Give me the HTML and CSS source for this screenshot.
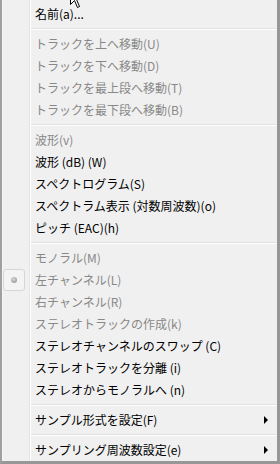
FILE: index.html
```html
<!DOCTYPE html>
<html lang="ja">
<head>
    <meta charset="UTF-8">
    <meta name="viewport" content="width=device-width, initial-scale=1.0">
    <title>トラックメニュー</title>
    <link rel="stylesheet" href="styles.css">
</head>
<body>
    <div class="menu">
        <div class="item"><span class="check"></span><span class="label">名前(a)...</span></div>
        <div class="sep"></div>
        <div class="item disabled"><span class="check"></span><span class="label">トラックを上へ移動(U)</span></div>
        <div class="item disabled"><span class="check"></span><span class="label">トラックを下へ移動(D)</span></div>
        <div class="item disabled"><span class="check"></span><span class="label">トラックを最上段へ移動(T)</span></div>
        <div class="item disabled"><span class="check"></span><span class="label">トラックを最下段へ移動(B)</span></div>
        <div class="sep"></div>
        <div class="item disabled"><span class="check"></span><span class="label">波形(v)</span></div>
        <div class="item"><span class="check"></span><span class="label">波形 (dB) (W)</span></div>
        <div class="item"><span class="check"></span><span class="label">スペクトログラム(S)</span></div>
        <div class="item"><span class="check"></span><span class="label">スペクトラム表示 (対数周波数)(o)</span></div>
        <div class="item"><span class="check"></span><span class="label">ピッチ (EAC)(h)</span></div>
        <div class="sep"></div>
        <div class="item disabled"><span class="check"></span><span class="label">モノラル(M)</span></div>
        <div class="item disabled"><span class="check"><span class="radio"><span class="dot"></span></span></span><span class="label">左チャンネル(L)</span></div>
        <div class="item disabled"><span class="check"></span><span class="label">右チャンネル(R)</span></div>
        <div class="item disabled"><span class="check"></span><span class="label">ステレオトラックの作成(k)</span></div>
        <div class="item"><span class="check"></span><span class="label">ステレオチャンネルのスワップ (C)</span></div>
        <div class="item"><span class="check"></span><span class="label">ステレオトラックを分離 (i)</span></div>
        <div class="item"><span class="check"></span><span class="label">ステレオからモノラルへ (n)</span></div>
        <div class="sep"></div>
        <div class="item"><span class="check"></span><span class="label">サンプル形式を設定(F)</span><span class="arrow"></span></div>
        <div class="sep"></div>
        <div class="item"><span class="check"></span><span class="label">サンプリング周波数設定(e)</span><span class="arrow"></span></div>

        <svg class="cursor" width="13" height="21" viewBox="0 0 13 21">
            <polygon points="0.5,0.5 0.5,16.5 4.5,12.5 7.5,19.5 9.5,18.5 6.5,11.5 11.5,11.5" fill="#fff" stroke="#000" stroke-width="1"/>
        </svg>
    </div>
</body>
</html>
```

FILE: styles.css
```css
body {
    margin: 0;
    padding: 0;
    background-color: #f0f0f0;
    font-family: "Noto Sans CJK JP", "Noto Sans", sans-serif;
    font-size: 12px;
}
.menu {
    position: relative;
    width: 280px;
    height: 464px;
    box-sizing: border-box;
    padding: 3px 1px 2px 1px;
    border-left: 2px solid #a0a0a0;
    border-right: 3px solid #979797;
    border-bottom: 3px solid #979797;
    background-color: #f0f0f0;
    /* gutter line next to the check column */
    background-image: linear-gradient(to right,
        #f6f6f6 0, #f6f6f6 1px, transparent 1px,
        transparent 27px, #e2e3e3 27px, #e2e3e3 28px,
        #ffffff 28px, #ffffff 29px, transparent 29px);
    overflow: hidden;
}
.item {
    display: flex;
    align-items: center;
    height: 22px;
    color: #000;
    white-space: nowrap;
}
.item.disabled {
    color: #888;
}
.check {
    width: 32px;
    flex: none;
    display: flex;
    align-items: center;
}
.label {
    flex: 1;
    line-height: 22px;
}
.arrow {
    width: 0;
    height: 0;
    margin-right: 8px;
    border-top: 4px solid transparent;
    border-bottom: 4px solid transparent;
    border-left: 4px solid #000;
}
.sep {
    margin: 3px 0 3px 28px;
    border-top: 1px solid #e0e0e0;
    border-bottom: 1px solid #ffffff;
}
.radio {
    display: flex;
    align-items: center;
    justify-content: center;
    width: 20px;
    height: 20px;
    border: 1px solid #d6d6d6;
    border-radius: 3px;
    background-color: #f4f4f4;
}
.dot {
    width: 6px;
    height: 6px;
    border-radius: 50%;
    background: radial-gradient(circle at 40% 35%, #d8d8d8, #8a8a8a);
}
.cursor {
    position: absolute;
    left: 68px;
    top: -12px;
}
```
